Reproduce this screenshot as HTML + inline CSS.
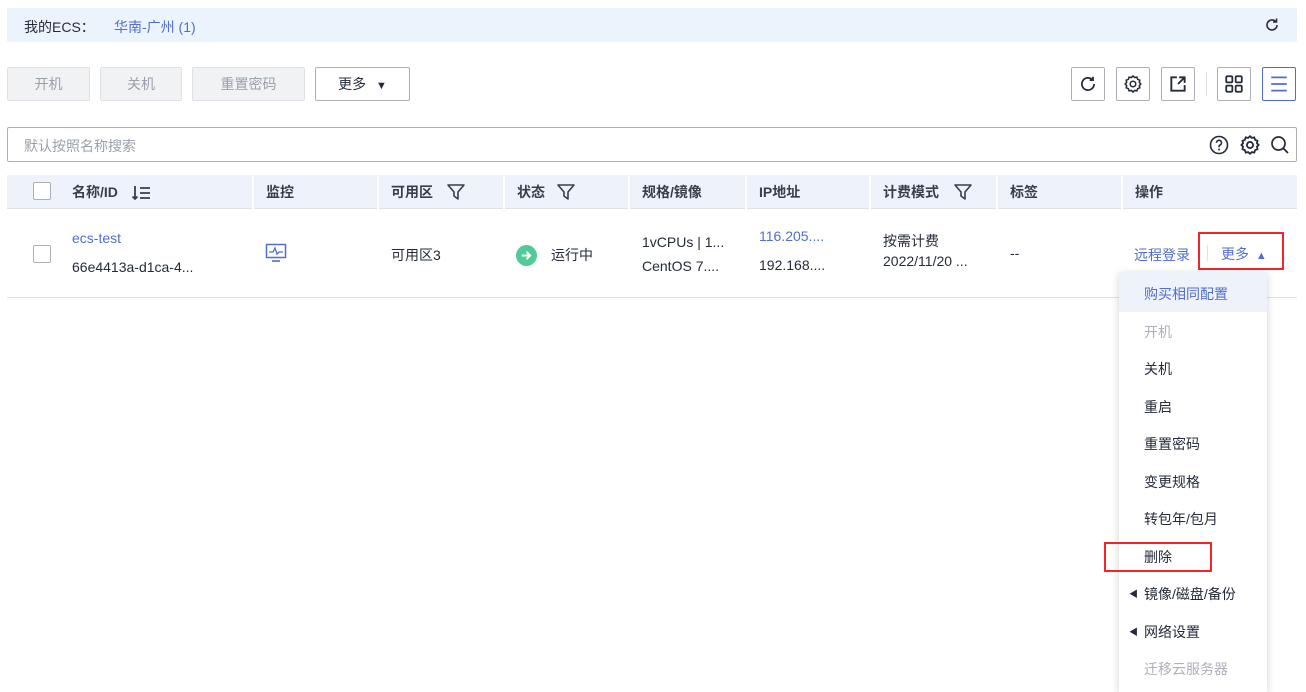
<!DOCTYPE html>
<html><head><meta charset="utf-8"><style>
*{margin:0;padding:0;box-sizing:border-box}
body{width:1306px;height:679px;overflow:hidden;background:#fff;font-family:"Liberation Sans","Noto Sans CJK SC",sans-serif;font-size:14px;color:#252b3a;position:relative}
.a{position:absolute}
.top{left:7px;top:8px;width:1290px;height:34px;background:#ebf4fd}
.btn{position:absolute;top:67px;height:34px;border:1px solid #dfe1e6;background:#f1f2f4;color:#9aa0ab;text-align:center;line-height:32px;border-radius:2px}
.ib{position:absolute;top:67px;width:34px;height:34px;border:1px solid #adb0b8;border-radius:2px;background:#fff}
.ib svg{position:absolute;left:6px;top:6px}
.hd{left:7px;top:175px;width:1290px;height:34px;background:#eef3fb;border-bottom:1px solid #dfe1e6}
.th{position:absolute;top:175px;line-height:34px;font-weight:bold;color:#393f4a}
.sep{position:absolute;top:176px;width:2px;height:33px;background:#fff}
.cb{position:absolute;width:18px;height:18px;border:1px solid #adb0b8;border-radius:2px;background:#fff}
.menu{left:1119px;top:272px;width:148px;height:420px;background:#fff;box-shadow:0 2px 8px rgba(0,0,0,.18)}
.mi{position:absolute;left:1144px}
.blue{color:#526ecc}
</style></head><body>
<div class="a top"></div>
<div class="a" style="left:24px;top:17px">我的ECS：</div>
<div class="a blue" style="left:114px;top:17px">华南-广州 (1)</div>
<svg class="a" style="left:1264px;top:17px" width="16" height="16" viewBox="0 0 16 16"><path d="M13 8a5 5 0 1 1-1.5-3.6" fill="none" stroke="#252b3a" stroke-width="1.6"/><path d="M12.5 1.5v3.5H9" fill="none" stroke="#252b3a" stroke-width="1.6"/></svg>

<div class="btn" style="left:7px;width:83px">开机</div>
<div class="btn" style="left:100px;width:82px">关机</div>
<div class="btn" style="left:192px;width:113px">重置密码</div>
<div class="btn" style="left:315px;width:95px;background:#fff;border-color:#adb0b8;color:#252b3a">更多 <span style="font-size:11px;margin-left:6px">▼</span></div>

<div class="ib" style="left:1071px"><svg width="20" height="20" viewBox="0 0 18 18"><path d="M14.5 9a5.5 5.5 0 1 1-1.6-3.9" fill="none" stroke="#252b3a" stroke-width="1.6"/><path d="M13.5 2.5v3h-3" fill="none" stroke="#252b3a" stroke-width="1.6"/></svg></div>
<div class="ib" style="left:1116px"><svg width="20" height="20" viewBox="0 0 18 18"><path d="M9 1.8l1.5 1.4 2-.4.7 2 1.9.8-.4 2 1.3 1.4-1.3 1.4.4 2-1.9.8-.7 2-2-.4L9 16.2l-1.5-1.4-2 .4-.7-2-1.9-.8.4-2L2 9l1.3-1.4-.4-2 1.9-.8.7-2 2 .4z" fill="none" stroke="#252b3a" stroke-width="1.4"/><circle cx="9" cy="9" r="2.5" fill="none" stroke="#252b3a" stroke-width="1.4"/></svg></div>
<div class="ib" style="left:1161px"><svg width="20" height="20" viewBox="0 0 18 18"><path d="M8 3H3v12h12v-5" fill="none" stroke="#252b3a" stroke-width="1.7"/><path d="M10 3h5v5M15 3l-6 6" fill="none" stroke="#252b3a" stroke-width="1.7"/></svg></div>
<div class="a" style="left:1206px;top:72px;width:1px;height:24px;background:#dfe1e6"></div>
<div class="ib" style="left:1217px"><svg width="20" height="20" viewBox="0 0 18 18"><g fill="none" stroke="#252b3a" stroke-width="1.6"><rect x="2" y="2" width="5.5" height="5.5" rx="1"/><rect x="10.5" y="2" width="5.5" height="5.5" rx="1"/><rect x="2" y="10.5" width="5.5" height="5.5" rx="1"/><rect x="10.5" y="10.5" width="5.5" height="5.5" rx="1"/></g></svg></div>
<div class="ib" style="left:1262px;border-color:#526ecc"><svg width="20" height="20" viewBox="0 0 18 18"><path d="M2 3h14M2 9h14M2 15h14" stroke="#526ecc" stroke-width="1.6"/></svg></div>

<div class="a" style="left:7px;top:127px;width:1290px;height:35px;border:1px solid #adb0b8;border-radius:2px"></div>
<div class="a" style="left:24px;top:136px;color:#9aa0ab">默认按照名称搜索</div>
<svg class="a" style="left:1209px;top:135px" width="20" height="20" viewBox="0 0 20 20"><circle cx="10" cy="10" r="8.5" fill="none" stroke="#252b3a" stroke-width="1.6"/><path d="M7.5 7.8a2.5 2.5 0 1 1 3.4 2.3c-.6.3-.9.8-.9 1.5v.6" fill="none" stroke="#252b3a" stroke-width="1.6"/><circle cx="10" cy="14.5" r="1" fill="#252b3a"/></svg>
<svg class="a" style="left:1239px;top:134px" width="22" height="22" viewBox="0 0 18 18"><path d="M9 1.8l1.5 1.4 2-.4.7 2 1.9.8-.4 2 1.3 1.4-1.3 1.4.4 2-1.9.8-.7 2-2-.4L9 16.2l-1.5-1.4-2 .4-.7-2-1.9-.8.4-2L2 9l1.3-1.4-.4-2 1.9-.8.7-2 2 .4z" fill="none" stroke="#252b3a" stroke-width="1.5"/><circle cx="9" cy="9" r="2.5" fill="none" stroke="#252b3a" stroke-width="1.5"/></svg>
<svg class="a" style="left:1270px;top:135px" width="20" height="20" viewBox="0 0 20 20"><circle cx="8.5" cy="8.5" r="6.5" fill="none" stroke="#252b3a" stroke-width="1.7"/><path d="M13.5 13.5l4.5 4.5" stroke="#252b3a" stroke-width="1.8"/></svg>

<div class="a hd"></div>
<div class="sep" style="left:252px"></div><div class="sep" style="left:377px"></div><div class="sep" style="left:503px"></div><div class="sep" style="left:628px"></div><div class="sep" style="left:745px"></div><div class="sep" style="left:869px"></div><div class="sep" style="left:996px"></div><div class="sep" style="left:1121px"></div>
<div class="cb" style="left:33px;top:182px"></div>
<div class="th" style="left:72px">名称/ID</div>
<svg class="a" style="left:132px;top:184px" width="20" height="18" viewBox="0 0 20 18"><path d="M3 2v13M0.5 12.5L3 15l2.5-2.5M8 4h10M8 9h10M8 14h10" fill="none" stroke="#393f4a" stroke-width="1.8"/></svg>
<div class="th" style="left:266px">监控</div>
<div class="th" style="left:391px">可用区</div>
<div class="th" style="left:517px">状态</div>
<div class="th" style="left:642px">规格/镜像</div>
<div class="th" style="left:759px">IP地址</div>
<div class="th" style="left:883px">计费模式</div>
<div class="th" style="left:1010px">标签</div>
<div class="th" style="left:1135px">操作</div>
<svg class="a" style="left:446px;top:182px" width="20" height="20" viewBox="0 0 20 20"><path d="M2 3h16l-6 7v7l-4-3v-4z" fill="none" stroke="#393f4a" stroke-width="1.6" stroke-linejoin="round"/></svg>
<svg class="a" style="left:556px;top:182px" width="20" height="20" viewBox="0 0 20 20"><path d="M2 3h16l-6 7v7l-4-3v-4z" fill="none" stroke="#393f4a" stroke-width="1.6" stroke-linejoin="round"/></svg>
<svg class="a" style="left:953px;top:182px" width="20" height="20" viewBox="0 0 20 20"><path d="M2 3h16l-6 7v7l-4-3v-4z" fill="none" stroke="#393f4a" stroke-width="1.6" stroke-linejoin="round"/></svg>

<div class="cb" style="left:33px;top:245px"></div>
<div class="a blue" style="left:72px;top:230px">ecs-test</div>
<div class="a" style="left:72px;top:259px">66e4413a-d1ca-4...</div>
<svg class="a" style="left:265px;top:243px" width="22" height="20" viewBox="0 0 22 20"><rect x="1.5" y="1.5" width="19" height="13" fill="none" stroke="#526ecc" stroke-width="1.5"/><path d="M4 9h4l2-4 2 6 2-2h4" fill="none" stroke="#526ecc" stroke-width="1.3"/><path d="M7 18h8" stroke="#526ecc" stroke-width="1.6"/></svg>
<div class="a" style="left:391px;top:245px">可用区3</div>
<svg class="a" style="left:516px;top:245px" width="21" height="21" viewBox="0 0 20 20"><circle cx="10" cy="10" r="10" fill="#4fcb9b"/><path d="M5.5 10h8M10 6.5l3.5 3.5-3.5 3.5" fill="none" stroke="#fff" stroke-width="1.8"/></svg>
<div class="a" style="left:551px;top:245px">运行中</div>
<div class="a" style="left:642px;top:234px">1vCPUs | 1...</div>
<div class="a" style="left:642px;top:258px">CentOS 7....</div>
<div class="a blue" style="left:759px;top:228px">116.205....</div>
<div class="a" style="left:759px;top:257px">192.168....</div>
<div class="a" style="left:883px;top:231px">按需计费</div>
<div class="a" style="left:883px;top:253px">2022/11/20 ...</div>
<div class="a" style="left:1010px;top:245px">--</div>
<div class="a blue" style="left:1134px;top:245px">远程登录</div>
<div class="a" style="left:1207px;top:245px;width:1px;height:16px;background:#dfe1e6"></div>
<div class="a blue" style="left:1221px;top:244px">更多 <span style="font-size:11px;margin-left:3px">▲</span></div>
<div class="a" style="left:1198px;top:232px;width:86px;height:38px;border:2px solid #f0262b"></div>
<div class="a" style="left:7px;top:297px;width:1290px;height:1px;background:#dfe1e6"></div>

<div class="a menu"></div>
<div class="a" style="left:1119px;top:272px;width:148px;height:40px;background:#eef3fb"></div>
<div class="mi blue" style="top:284px">购买相同配置</div>
<div class="mi" style="top:322px;color:#adb0b8">开机</div>
<div class="mi" style="top:359px">关机</div>
<div class="mi" style="top:397px">重启</div>
<div class="mi" style="top:434px">重置密码</div>
<div class="mi" style="top:472px">变更规格</div>
<div class="mi" style="top:509px">转包年/包月</div>
<div class="mi" style="top:547px">删除</div>
<div class="a" style="left:1104px;top:542px;width:108px;height:30px;border:2px solid #f0262b"></div>
<div class="a" style="left:1129px;top:587px;font-size:9px">◀</div>
<div class="mi" style="top:584px">镜像/磁盘/备份</div>
<div class="a" style="left:1129px;top:625px;font-size:9px">◀</div>
<div class="mi" style="top:622px">网络设置</div>
<div class="mi" style="top:659px;color:#adb0b8">迁移云服务器</div>
</body></html>
